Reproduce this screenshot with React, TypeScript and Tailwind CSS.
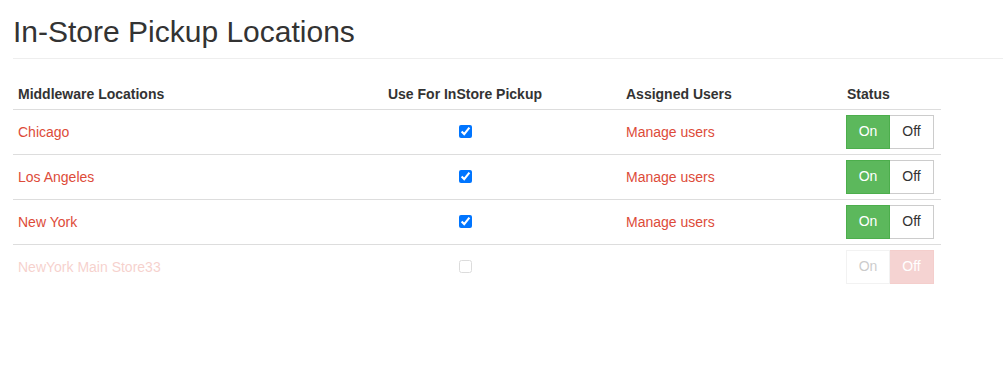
import React from "react";

type Row = { name: string; checked: boolean; users: boolean; on: boolean; disabled?: boolean };

const rows: Row[] = [
  { name: "Chicago", checked: true, users: true, on: true },
  { name: "Los Angeles", checked: true, users: true, on: true },
  { name: "New York", checked: true, users: true, on: true },
  { name: "NewYork Main Store33", checked: false, users: false, on: false, disabled: true },
];

function Toggle({ on }: { on: boolean }) {
  return (
    <div className="flex">
      <span
        className={
          on
            ? "w-[44px] h-[34px] flex items-center justify-center bg-[#5cb85c] text-white border border-[#4cae4c]"
            : "w-[44px] h-[34px] flex items-center justify-center bg-white text-[#333] border border-[#ccc]"
        }
      >
        On
      </span>
      <span
        className={
          on
            ? "w-[44px] h-[34px] flex items-center justify-center bg-white text-[#333] border border-[#ccc] border-l-0"
            : "w-[44px] h-[34px] flex items-center justify-center bg-[#d9534f] text-white border border-[#d43f3a] border-l-0"
        }
      >
        Off
      </span>
    </div>
  );
}

export default function App() {
  return (
    <div className="bg-white min-h-[365px] pl-[13px] text-[14px] text-[#333]" style={{ fontFamily: '"Liberation Sans", Arial, sans-serif' }}>
      <h1 className="text-[30px] leading-[33px] pt-[15px] pb-[10px] border-b border-[#eee] font-normal">In-Store Pickup Locations</h1>
      <table className="w-[928px] mt-[19px] border-collapse">
        <thead>
          <tr className="h-[31px] border-b border-[#ddd]">
            <th className="w-[296px] text-left font-bold px-[5px] align-bottom pb-[4px]">Middleware Locations</th>
            <th className="w-[312px] text-center font-bold px-[5px] align-bottom pb-[4px]">Use For InStore Pickup</th>
            <th className="w-[221px] text-left font-bold px-[5px] align-bottom pb-[4px]">Assigned Users</th>
            <th className="w-[99px] text-left font-bold px-[5px] align-bottom pb-[4px]">Status</th>
          </tr>
        </thead>
        <tbody>
          {rows.map((r, i) => (
            <tr
              key={r.name}
              className={
                (i < rows.length - 1 ? "border-b border-[#ddd] " : "") + "h-[45px]"
              }
            >
              <td className={"px-[5px] pt-[2px] align-middle text-[#dd4b39] " + (r.disabled ? "opacity-25" : "")}>{r.name}</td>
              <td className={"px-[5px] align-middle text-center " + (r.disabled ? "opacity-25" : "")}>
                <input type="checkbox" defaultChecked={r.checked} className="w-[13px] h-[13px] align-middle m-0 relative top-[-1px]" />
              </td>
              <td className="px-[5px] pt-[2px] align-middle text-[#dd4b39]">{r.users ? "Manage users" : ""}</td>
              <td className={"pl-[4px] align-middle " + (r.disabled ? "opacity-25" : "")}>
                <Toggle on={r.on} />
              </td>
            </tr>
          ))}
        </tbody>
      </table>
    </div>
  );
}
